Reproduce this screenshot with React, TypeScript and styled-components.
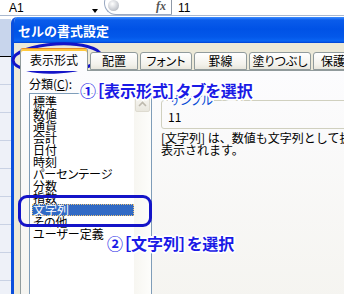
import React from "react";
import styled, { createGlobalStyle } from "styled-components";

const JP = `"Noto Sans CJK JP", "Noto Sans", sans-serif`;

const GlobalStyle = createGlobalStyle`
  html, body {
    margin: 0;
    padding: 0;
    background: #fff;
  }
  body {
    font-family: ${JP};
  }
`;

const Screen = styled.div`
  position: relative;
  width: 344px;
  height: 294px;
  overflow: hidden;
  display: flex;
  flex-direction: column;
  background: #fff;
  font-family: ${JP};
  font-size: 12px;
  color: #000;
`;

/* ---------- excel formula bar ---------- */

const FormulaBar = styled.div`
  flex: 0 0 15px;
  height: 15px;
  display: flex;
  align-items: flex-end;
  overflow: hidden;
  border-bottom: 1px solid #a9b8cf;
  background: #fff;
`;

const NameBox = styled.div`
  width: 104px;
  display: flex;
  align-items: flex-end;
  padding-left: 9px;
  box-sizing: border-box;
  line-height: 13px;
  font-family: "Liberation Sans", sans-serif;
`;

const DropArrow = styled.span`
  margin-left: auto;
  margin-right: 6px;
  margin-bottom: 2px;
  border-left: 3px solid transparent;
  border-right: 3px solid transparent;
  border-top: 4px solid #000;
`;

const FxPill = styled.div`
  width: 68px;
  height: 24px;
  box-sizing: border-box;
  display: flex;
  align-items: flex-end;
  border: 1px solid #9aa9c2;
  border-right: 1px solid #8e99a8;
  border-radius: 12px 0 0 12px;
  padding: 0 5px 1px 3px;
`;

const RoundKnob = styled.span`
  width: 11px;
  height: 11px;
  border-radius: 50%;
  margin-bottom: 2px;
  background: radial-gradient(circle at 40% 35%, #ffffff, #c9ccd2 60%, #9ea3ad);
`;

const Fx = styled.span`
  margin-left: auto;
  font-family: "Liberation Serif", serif;
  font-style: italic;
  font-weight: bold;
  font-size: 12px;
  line-height: 13px;
  color: #555;
`;

const FormulaText = styled.div`
  padding-left: 6px;
  line-height: 13px;
  font-family: "Liberation Sans", sans-serif;
`;

/* ---------- sheet + dialog ---------- */

const Workspace = styled.div`
  flex: 1;
  display: flex;
  align-items: flex-start;
  min-height: 0;
`;

const SheetEdge = styled.div`
  flex: 0 0 11px;
  align-self: stretch;
  display: flex;
  flex-direction: column;
`;

const EdgeGap = styled.div`
  height: 3px;
  background: #fff;
`;

const EdgeHeader = styled.div`
  height: 37px;
  background: #c8d5ec;
  border-bottom: 1px solid #000;
`;

const EdgeGrid = styled.div`
  flex: 1;
  background: repeating-linear-gradient(
    to bottom,
    #eef1f8 0px,
    #eef1f8 27px,
    #c9d2e4 27px,
    #c9d2e4 28px
  );
`;

const Dialog = styled.div`
  flex: 0 0 auto;
  width: 360px;
  height: 300px;
  margin-top: 1px;
  display: flex;
  flex-direction: column;
  border-left: 3px solid #0b4fdd;
  border-top-left-radius: 6px;
  overflow: hidden;
`;

const TitleBar = styled.div`
  flex: 0 0 26px;
  display: flex;
  align-items: center;
  padding-left: 4px;
  color: #fff;
  font-weight: bold;
  font-size: 13px;
  background: linear-gradient(
    to bottom,
    #3d8dff 0px,
    #0a5ceb 3px,
    #0052e6 12px,
    #0358ea 20px,
    #0a65f3 24px,
    #0040d2 26px
  );
`;

const Body = styled.div`
  flex: 1;
  display: flex;
  flex-direction: column;
  background: #ece9d8;
  padding: 5px 0 0 6px;
`;

const TabStrip = styled.div`
  display: flex;
  align-items: flex-end;
  gap: 2px;
  height: 22px;
  position: relative;
  z-index: 1;
`;

const Tab = styled.div<{ $w: number; $active?: boolean }>`
  flex: 0 0 ${(p) => p.$w}px;
  box-sizing: border-box;
  height: ${(p) => (p.$active ? 23 : 18)}px;
  margin-bottom: ${(p) => (p.$active ? -1 : 0)}px;
  display: flex;
  align-items: center;
  justify-content: center;
  white-space: nowrap;
  font-feature-settings: "palt";
  line-height: 12px;
  border: 1px solid #919b9c;
  border-bottom: ${(p) => (p.$active ? "none" : "1px solid #919b9c")};
  border-top: 1px solid ${(p) => (p.$active ? "#e68b2c" : "#919b9c")};
  border-radius: 3px 3px 0 0;
  background: ${(p) =>
    p.$active
      ? "#fcfcfe"
      : "linear-gradient(to bottom, #ffffff, #f3f2ec 70%, #e8e6dc)"};
  box-shadow: ${(p) => (p.$active ? "inset 0 2px 0 #ffc83c" : "none")};
`;

const Panel = styled.div`
  flex: 1;
  display: flex;
  border: 1px solid #919b9c;
  padding: 6px 0 0 8px;
  background: linear-gradient(to bottom, #fcfcfe, #f4f3ee);
`;

const CategoryColumn = styled.div`
  flex: 0 0 123px;
  display: flex;
  flex-direction: column;
`;

const FieldLabel = styled.div`
  height: 14px;
  line-height: 14px;
  margin-bottom: 2px;
  u {
    text-decoration: underline;
  }
`;

const ListBox = styled.div`
  height: 240px;
  display: flex;
  border: 1px solid #7f9db9;
  background: #fff;
`;

const ItemList = styled.div`
  flex: 1;
  padding: 2px 0 0 2px;
`;

const Item = styled.div<{ $selected?: boolean }>`
  height: 12px;
  line-height: 12px;
  padding-left: 1px;
  white-space: nowrap;
  font-feature-settings: "palt";
  color: ${(p) => (p.$selected ? "#fff" : "#000")};
  background: ${(p) => (p.$selected ? "#316ac5" : "transparent")};
  outline: ${(p) => (p.$selected ? "1px dotted #e9c27a" : "none")};
  outline-offset: -1px;
`;

const ScrollTrack = styled.div`
  flex: 0 0 17px;
  background: linear-gradient(to right, #f7f6f1, #fdfdfb);
`;

const ScrollButton = styled.div`
  margin: 1px;
  height: 17px;
  box-sizing: border-box;
  border: 1px solid #dedbd0;
  border-radius: 2px;
  background: linear-gradient(to bottom, #f8f7f3, #e9e7de);
  display: flex;
  align-items: center;
  justify-content: center;
`;

const DetailColumn = styled.div`
  flex: 1;
  padding-left: 9px;
  display: flex;
  flex-direction: column;
  min-width: 0;
`;

const GroupBox = styled.fieldset`
  margin: 17px 0 0 0;
  width: 220px;
  height: 35px;
  box-sizing: border-box;
  padding: 0 6px;
  border: 1px solid #d0d0bf;
  border-radius: 3px;
`;

const GroupLegend = styled.legend`
  padding: 0 1px;
  line-height: 12px;
  color: #0046d5;
  font-feature-settings: "palt";
`;

const SampleValue = styled.div`
  margin-top: 4px;
  line-height: 14px;
`;

const Description = styled.div`
  margin-top: 3px;
  line-height: 12px;
  white-space: nowrap;
`;

/* ---------- annotations ---------- */

const EllipseMark = styled.svg`
  position: absolute;
  left: 8px;
  top: 40px;
  width: 100px;
  height: 38px;
  overflow: visible;
`;

const BoxMark = styled.div`
  position: absolute;
  left: 18px;
  top: 195px;
  width: 134px;
  height: 32px;
  box-sizing: border-box;
  border: 3px solid #1414c8;
  border-radius: 9px;
`;

const Callout = styled.div<{ $left: number; $top: number }>`
  position: absolute;
  left: ${(p) => p.$left}px;
  top: ${(p) => p.$top}px;
  font-size: 16px;
  line-height: 18px;
  font-weight: bold;
  font-feature-settings: "palt";
  white-space: nowrap;
  color: #1a1ae6;
  text-shadow: 1px 0 0 #fff, -1px 0 0 #fff, 0 1px 0 #fff, 0 -1px 0 #fff,
    1px 1px 0 #fff, -1px -1px 0 #fff, 1px -1px 0 #fff, -1px 1px 0 #fff,
    2px 0 0 #fff, -2px 0 0 #fff, 0 2px 0 #fff, 0 -2px 0 #fff;
`;

const tabs = [
  { label: "表示形式", w: 68, active: true },
  { label: "配置", w: 48 },
  { label: "フォント", w: 52 },
  { label: "罫線", w: 53 },
  { label: "塗りつぶし", w: 62 },
  { label: "保護", w: 40 },
];

const categories = [
  "標準",
  "数値",
  "通貨",
  "会計",
  "日付",
  "時刻",
  "パーセンテージ",
  "分数",
  "指数",
  "文字列",
  "その他",
  "ユーザー定義",
];

export default function App() {
  return (
    <>
      <GlobalStyle />
      <Screen>
        <FormulaBar>
          <NameBox>
            A1
            <DropArrow />
          </NameBox>
          <FxPill>
            <RoundKnob />
            <Fx>fx</Fx>
          </FxPill>
          <FormulaText>11</FormulaText>
        </FormulaBar>

        <Workspace>
          <SheetEdge>
            <EdgeGap />
            <EdgeHeader />
            <EdgeGrid />
          </SheetEdge>

          <Dialog>
            <TitleBar>セルの書式設定</TitleBar>
            <Body>
              <TabStrip>
                {tabs.map((t) => (
                  <Tab key={t.label} $w={t.w} $active={t.active}>
                    {t.label}
                  </Tab>
                ))}
              </TabStrip>
              <Panel>
                <CategoryColumn>
                  <FieldLabel>
                    分類(<u>C</u>):
                  </FieldLabel>
                  <ListBox>
                    <ItemList>
                      {categories.map((c) => (
                        <Item key={c} $selected={c === "文字列"}>
                          {c}
                        </Item>
                      ))}
                    </ItemList>
                    <ScrollTrack>
                      <ScrollButton>
                        <svg width="9" height="6" viewBox="0 0 9 6">
                          <path
                            d="M1 5 L4.5 1.5 L8 5"
                            fill="none"
                            stroke="#bdb9ad"
                            strokeWidth="1.6"
                          />
                        </svg>
                      </ScrollButton>
                    </ScrollTrack>
                  </ListBox>
                </CategoryColumn>

                <DetailColumn>
                  <GroupBox>
                    <GroupLegend>サンプル</GroupLegend>
                    <SampleValue>11</SampleValue>
                  </GroupBox>
                  <Description>
                    [文字列] は、数値も文字列として扱います。入力したとおりにセル内に
                    <br />
                    表示されます。
                  </Description>
                </DetailColumn>
              </Panel>
            </Body>
          </Dialog>
        </Workspace>

        <EllipseMark viewBox="0 0 100 38">
          <ellipse
            cx="49"
            cy="18"
            rx="44"
            ry="14"
            fill="none"
            stroke="#1414c8"
            strokeWidth="3"
            transform="rotate(-3 49 18)"
          />
        </EllipseMark>
        <BoxMark />
        <Callout $left={80} $top={81}>
          ①［表示形式］タブを選択
        </Callout>
        <Callout $left={107} $top={234}>
          ②［文字列］を選択
        </Callout>
      </Screen>
    </>
  );
}
